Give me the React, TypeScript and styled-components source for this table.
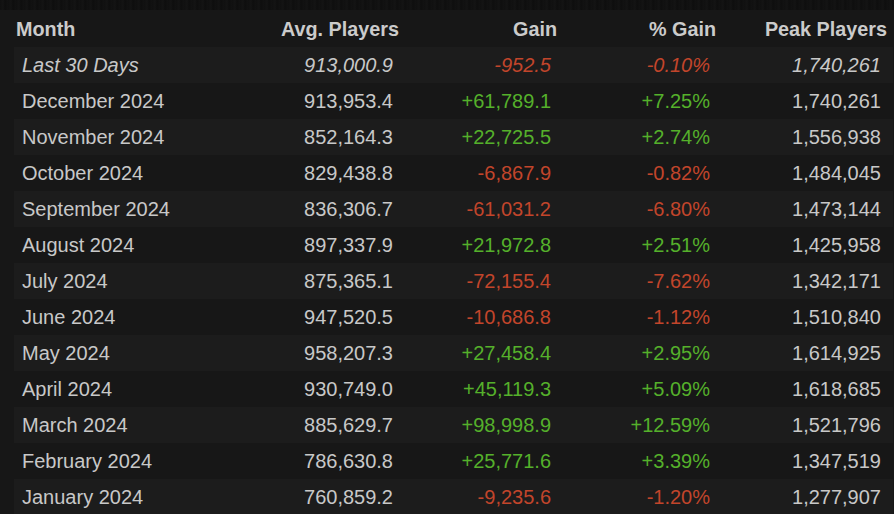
import React from 'react';
import styled, { createGlobalStyle } from 'styled-components';

const GlobalStyle = createGlobalStyle`
    html, body {
        margin: 0;
        padding: 0;
        background-color: #171717;
    }
    body {
        font-family: "Liberation Sans", Arial, sans-serif;
        overflow: hidden;
    }
`

const TopStrip = styled.div`
    height: 10px;
    background: repeating-linear-gradient(90deg, #101010 0px, #141414 3px, #0e0e0e 5px, #121212 8px);
`

const Table = styled.div`
    margin: 2px 0 0 14px;
    width: 879px;
    display: flex;
    flex-direction: column;
`

const Row = styled.div<{ $striped?: boolean; $italic?: boolean }>`
    display: grid;
    grid-template-columns: 206px 185px 158px 159px 171px;
    height: 36px;
    align-items: center;
    background-color: ${p => (p.$striped ? '#1c1c1c' : 'transparent')};
    font-style: ${p => (p.$italic ? 'italic' : 'normal')};
`

const HeaderRow = styled(Row)`
    height: 35px;
`

const HeadCell = styled.div<{ $left?: boolean }>`
    font-size: 19.8px;
    font-weight: bold;
    color: #cbcbcb;
    text-align: ${p => (p.$left ? 'left' : 'right')};
    padding: ${p => (p.$left ? '0 0 0 2px' : '0 6px 0 0')};
    white-space: nowrap;
`

const Cell = styled.div<{ $left?: boolean; $tone?: 'up' | 'down' }>`
    font-size: 20px;
    color: ${p => (p.$tone === 'up' ? '#55b02b' : p.$tone === 'down' ? '#c2452b' : '#c8c8c8')};
    text-align: ${p => (p.$left ? 'left' : 'right')};
    padding: ${p => (p.$left ? '0 0 0 8px' : '0 12px 0 0')};
    white-space: nowrap;
`

type Month = { month: string; avg: string; gain: string; pct: string; peak: string };

const rows: Month[] = [
    { month: 'Last 30 Days', avg: '913,000.9', gain: '-952.5', pct: '-0.10%', peak: '1,740,261' },
    { month: 'December 2024', avg: '913,953.4', gain: '+61,789.1', pct: '+7.25%', peak: '1,740,261' },
    { month: 'November 2024', avg: '852,164.3', gain: '+22,725.5', pct: '+2.74%', peak: '1,556,938' },
    { month: 'October 2024', avg: '829,438.8', gain: '-6,867.9', pct: '-0.82%', peak: '1,484,045' },
    { month: 'September 2024', avg: '836,306.7', gain: '-61,031.2', pct: '-6.80%', peak: '1,473,144' },
    { month: 'August 2024', avg: '897,337.9', gain: '+21,972.8', pct: '+2.51%', peak: '1,425,958' },
    { month: 'July 2024', avg: '875,365.1', gain: '-72,155.4', pct: '-7.62%', peak: '1,342,171' },
    { month: 'June 2024', avg: '947,520.5', gain: '-10,686.8', pct: '-1.12%', peak: '1,510,840' },
    { month: 'May 2024', avg: '958,207.3', gain: '+27,458.4', pct: '+2.95%', peak: '1,614,925' },
    { month: 'April 2024', avg: '930,749.0', gain: '+45,119.3', pct: '+5.09%', peak: '1,618,685' },
    { month: 'March 2024', avg: '885,629.7', gain: '+98,998.9', pct: '+12.59%', peak: '1,521,796' },
    { month: 'February 2024', avg: '786,630.8', gain: '+25,771.6', pct: '+3.39%', peak: '1,347,519' },
    { month: 'January 2024', avg: '760,859.2', gain: '-9,235.6', pct: '-1.20%', peak: '1,277,907' },
];

const toneOf = (v: string) => (v.startsWith('-') ? 'down' : 'up');

const App = () => {
    return (
        <>
            <GlobalStyle />
            <TopStrip />
            <Table>
                <HeaderRow>
                    <HeadCell $left>Month</HeadCell>
                    <HeadCell>Avg. Players</HeadCell>
                    <HeadCell>Gain</HeadCell>
                    <HeadCell>% Gain</HeadCell>
                    <HeadCell>Peak Players</HeadCell>
                </HeaderRow>
                {rows.map((r, i) => (
                    <Row key={r.month} $striped={i % 2 === 0} $italic={i === 0}>
                        <Cell $left>{r.month}</Cell>
                        <Cell>{r.avg}</Cell>
                        <Cell $tone={toneOf(r.gain)}>{r.gain}</Cell>
                        <Cell $tone={toneOf(r.pct)}>{r.pct}</Cell>
                        <Cell>{r.peak}</Cell>
                    </Row>
                ))}
            </Table>
        </>
    );
};

export default App;
